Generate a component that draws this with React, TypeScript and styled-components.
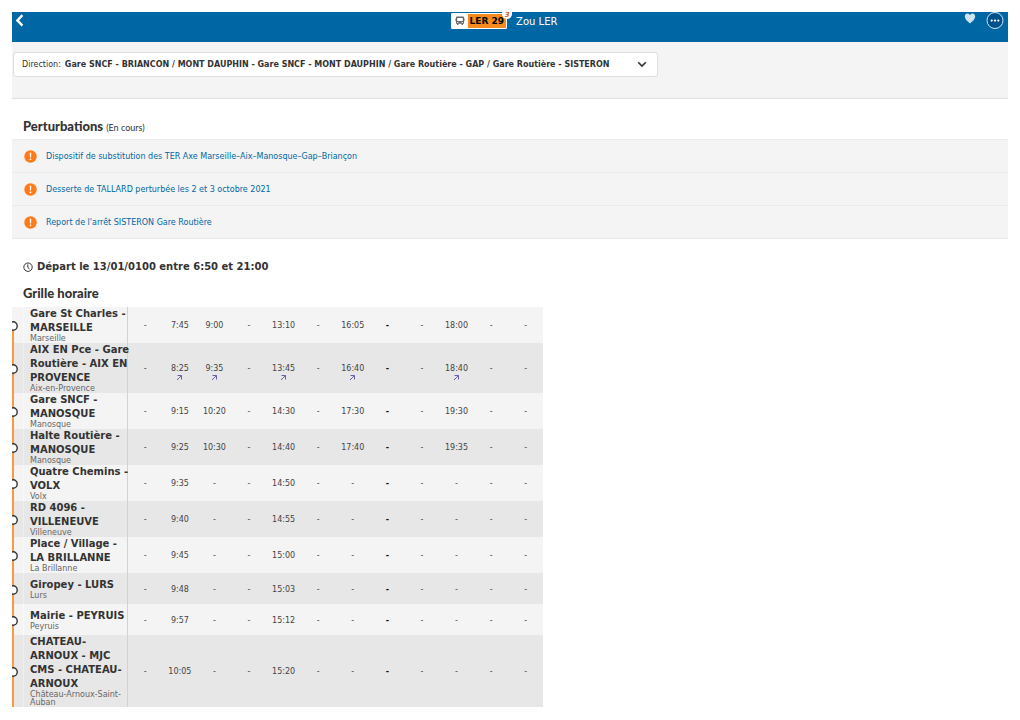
import React from "react";
import styled, { createGlobalStyle, css } from "styled-components";

const GlobalStyle = createGlobalStyle`
  *, *::before, *::after { box-sizing: border-box; }
  body {
    margin: 12px;
    background: #fff;
    color: #333;
    font-family: "DejaVu Sans", Verdana, sans-serif;
    font-size: 8px;
  }
  h1, h2, h3, ul, p { margin: 0; padding: 0; font-weight: inherit; }
  button { margin: 0; padding: 0; border: 0; background: none; font: inherit; color: inherit; cursor: pointer; }
`;

const Header = styled.header`
  display: grid;
  grid-template-columns: 1fr auto 1fr;
  align-items: start;
  height: 30px;
  background: #0067a5;
  color: #fff;
`;

const BackButton = styled.button`
  display: flex;
  width: 14px;
  height: 17px;
  padding: 2px 0 0 3px;
`;

const Title = styled.h1`
  display: flex;
  align-items: center;
  gap: 9px;
  height: 18px;
  padding-right: 12px;
  font-size: 10px;
`;

const LineBadge = styled.span`
  position: relative;
  display: flex;
  align-items: stretch;
  height: 16px;
  border: 1px solid #fff;
  border-radius: 1px;
  background: #fff;
`;

const BadgeMode = styled.span`
  display: flex;
  align-items: center;
  justify-content: center;
  width: 16px;
`;

const BadgeCode = styled.strong`
  padding: 0 2px;
  background: #f58a1f;
  color: #000;
  font-size: 9px;
  line-height: 14px;
`;

const BadgeCount = styled.span`
  position: absolute;
  top: -2px;
  right: -6px;
  width: 10px;
  height: 7px;
  border-radius: 0 0 5px 5px;
  background: #fff;
  color: #d4581a;
  font-size: 7px;
  font-style: italic;
  font-weight: bold;
  line-height: 7px;
  text-align: center;
`;

const Actions = styled.div`
  display: flex;
  justify-content: flex-end;
  gap: 10px;
  padding-right: 4px;
`;

const ActionButton = styled.button`
  display: flex;
  height: 18px;
`;

const DirectionBar = styled.section`
  height: 57px;
  padding: 10px 1px;
  border-bottom: 1px solid #e2e2e2;
  background: #f4f4f4;
`;

const DirectionBox = styled.label`
  display: flex;
  align-items: center;
  max-width: 645px;
  height: 25px;
  padding: 0 10px 0 8px;
  border: 1px solid #dfdfdf;
  border-radius: 3px;
  background: #fff;
`;

const DirectionSelect = styled.select`
  flex: 1;
  min-width: 0;
  margin: 0 0 0 4px;
  padding: 0;
  border: 0;
  appearance: none;
  background: none;
  color: #333;
  font: bold 8px "DejaVu Sans", Verdana, sans-serif;
`;

const SectionTitle = styled.h2`
  padding-left: 11px;
  color: #333;
  font-family: Lato, sans-serif;
  font-size: 13px;
  font-weight: 900;
  line-height: 16px;
`;

const TitleNote = styled.small`
  font-size: 9px;
  font-weight: 400;
`;

const Disruptions = styled.section`
  padding-top: 19px;
`;

const DisruptionList = styled.ul`
  margin-top: 3px;
  list-style: none;
  background: #f4f4f4;
  border-bottom: 1px solid #e8e8e8;
`;

const DisruptionItem = styled.li`
  display: flex;
  align-items: center;
  gap: 9px;
  height: 33px;
  padding-left: 12px;
  border-top: 1px solid #ebebeb;
`;

const DisruptionLink = styled.a`
  color: #0067a5;
  text-decoration: none;
`;

const Departure = styled.p`
  display: flex;
  align-items: center;
  gap: 4px;
  padding: 22px 0 12px 11px;
  font-size: 10px;
  font-weight: bold;
  line-height: 12px;
`;

const Timetable = styled.table`
  width: 531px;
  max-width: 100%;
  margin-top: 6px;
  table-layout: fixed;
  border-collapse: separate;
  border-spacing: 0;
`;

const RailCol = styled.col`
  width: 12px;
`;

const StopCol = styled.col`
  width: 104px;
`;

const Row = styled.tr`
  height: 31px;
  background: #f4f4f4;
  &:nth-child(even) { background: #e7e7e7; }
`;

const RailCell = styled.td<{ $first: boolean }>`
  padding: 2px 0 0;
  border-right: 1px solid rgba(255, 255, 255, 0.35);
  background: linear-gradient(#f59b45, #f59b45) left bottom / 2px ${(p) => (p.$first ? "50%" : "100%")} no-repeat;
  vertical-align: middle;
  & svg { display: block; }
`;

const StopCell = styled.th`
  padding: 0 0 0 6px;
  border-right: 1px solid #d2d2d2;
  text-align: left;
  vertical-align: middle;
  white-space: nowrap;
`;

const StopLine = styled.span`
  display: block;
  font-size: 10px;
  font-weight: bold;
  line-height: 14px;
`;

const TownLine = styled.span`
  display: block;
  color: #666;
  font-size: 8px;
  font-weight: normal;
  line-height: 8px;
`;

const TimeCell = styled.td<{ $strong: boolean }>`
  padding: 2px 0 0;
  color: #444;
  font-size: 8px;
  line-height: 10px;
  text-align: center;
  vertical-align: middle;
  ${(p) =>
    p.$strong &&
    css`
      color: #111;
      font-weight: bold;
    `}
`;

const LinkedTime = styled.span`
  display: flex;
  flex-direction: column;
  align-items: center;
  padding-top: 7px;
`;

type Stop = { name: string[]; town: string[]; times: Record<number, string>; linked?: boolean };

const stops: Stop[] = [
  { name: ["Gare St Charles -", "MARSEILLE"], town: ["Marseille"], times: { 1: "7:45", 2: "9:00", 4: "13:10", 6: "16:05", 9: "18:00" } },
  { name: ["AIX EN Pce - Gare", "Routière - AIX EN", "PROVENCE"], town: ["Aix-en-Provence"], times: { 1: "8:25", 2: "9:35", 4: "13:45", 6: "16:40", 9: "18:40" }, linked: true },
  { name: ["Gare SNCF -", "MANOSQUE"], town: ["Manosque"], times: { 1: "9:15", 2: "10:20", 4: "14:30", 6: "17:30", 9: "19:30" } },
  { name: ["Halte Routière -", "MANOSQUE"], town: ["Manosque"], times: { 1: "9:25", 2: "10:30", 4: "14:40", 6: "17:40", 9: "19:35" } },
  { name: ["Quatre Chemins -", "VOLX"], town: ["Volx"], times: { 1: "9:35", 4: "14:50" } },
  { name: ["RD 4096 -", "VILLENEUVE"], town: ["Villeneuve"], times: { 1: "9:40", 4: "14:55" } },
  { name: ["Place / Village -", "LA BRILLANNE"], town: ["La Brillanne"], times: { 1: "9:45", 4: "15:00" } },
  { name: ["Giropey - LURS"], town: ["Lurs"], times: { 1: "9:48", 4: "15:03" } },
  { name: ["Mairie - PEYRUIS"], town: ["Peyruis"], times: { 1: "9:57", 4: "15:12" } },
  { name: ["CHATEAU-", "ARNOUX - MJC", "CMS - CHATEAU-", "ARNOUX"], town: ["Château-Arnoux-Saint-", "Auban"], times: { 1: "10:05", 4: "15:20" } },
];

const disruptions = [
  "Dispositif de substitution des TER Axe Marseille–Aix–Manosque–Gap–Briançon",
  "Desserte de TALLARD perturbée les 2 et 3 octobre 2021",
  "Report de l'arrêt SISTERON Gare Routière",
];

const columns = Array.from({ length: 12 }, (_, i) => i);
const STRONG_COLUMN = 7;

const ChevronLeft = () => (
  <svg width="9" height="13" viewBox="0 0 9 13" fill="none" stroke="#fff" strokeWidth="2.4">
    <path d="M7.400 1.200 2.400 6.400l5 5.200" />
  </svg>
);

const BusIcon = () => (
  <svg width="10" height="10" viewBox="0 0 10 10">
    <path fill="#666" fillRule="evenodd" d="M2 .6h6q1 0 1 1v1h.6v2.2H9v2.4q0 .6-.6.6H8v1.3H6.6V7.8H3.4v1.3H2V7.8h-.4Q1 7.800 1 7.200V4.800H.4V2.600H1v-1q0-1 1-1ZM2.200 2v3h5.600V2ZM2.200 6v.9h1.200V6ZM6.600 6v.9h1.200V6Z" />
  </svg>
);

const HeartIcon = () => (
  <svg width="12" height="14" viewBox="0 0 12 14">
    <path fill="#cfe3f1" d="M6 11.400C3.400 9.600.8 7 .8 4.300.8 2.600 2 1.500 3.400 1.500c1.100 0 2 .6 2.600 1.600.6-1 1.500-1.600 2.600-1.600 1.400 0 2.600 1.100 2.600 2.800C11.200 7 8.600 9.600 6 11.400Z" />
  </svg>
);

const MoreIcon = () => (
  <svg width="18" height="18" viewBox="0 0 18 18">
    <circle cx="9" cy="8.500" r="8" fill="#00508a" stroke="#d6e6f1" strokeWidth="1" />
    <g fill="#fff">
      <circle cx="5.700" cy="8.600" r="1.100" />
      <circle cx="9" cy="8.600" r="1.100" />
      <circle cx="12.300" cy="8.600" r="1.100" />
    </g>
  </svg>
);

const ChevronDown = () => (
  <svg width="10" height="7" viewBox="0 0 10 7" fill="none" stroke="#333" strokeWidth="1.600">
    <path d="M1.200 1.200 5 5l3.800-3.800" />
  </svg>
);

const WarningIcon = () => (
  <svg width="13" height="13" viewBox="0 0 13 13">
    <circle cx="6.500" cy="6.500" r="6.200" fill="#ff7b17" />
    <path d="M5.700 2.800h1.600L7 7.400H6Z" fill="#fff" />
    <circle cx="6.500" cy="9.300" r=".9" fill="#fff" />
  </svg>
);

const ClockIcon = () => (
  <svg width="10" height="10" viewBox="0 0 10 10" fill="none" stroke="#333" strokeWidth="1">
    <circle cx="5" cy="5.200" r="4.200" />
    <path d="M4.800 2.400v3L6.500 7" />
  </svg>
);

const StopMarker = () => (
  <svg width="6" height="10" viewBox="0 0 6 10">
    <circle cx="1" cy="5" r="4.200" fill="#fff" stroke="#333" strokeWidth="1.400" />
  </svg>
);

const ArrowUpRight = () => (
  <svg width="7" height="7" viewBox="0 0 7 7" fill="none" stroke="#6a5fae" strokeWidth="1">
    <path d="M1 6 5.500 1.500M1.500 1.500h4V5.500" />
  </svg>
);

export default function App() {
  return (
    <>
      <GlobalStyle />
      <Header>
        <BackButton aria-label="Retour"><ChevronLeft /></BackButton>
        <Title>
          <LineBadge>
            <BadgeMode><BusIcon /></BadgeMode>
            <BadgeCode>LER 29</BadgeCode>
            <BadgeCount>3</BadgeCount>
          </LineBadge>
          Zou LER
        </Title>
        <Actions>
          <ActionButton aria-label="Favori"><HeartIcon /></ActionButton>
          <ActionButton aria-label="Plus"><MoreIcon /></ActionButton>
        </Actions>
      </Header>

      <DirectionBar>
        <DirectionBox>
          Direction:
          <DirectionSelect>
            <option>Gare SNCF - BRIANCON / MONT DAUPHIN - Gare SNCF - MONT DAUPHIN / Gare Routière - GAP / Gare Routière - SISTERON</option>
          </DirectionSelect>
          <ChevronDown />
        </DirectionBox>
      </DirectionBar>

      <Disruptions>
        <SectionTitle>Perturbations <TitleNote>(En cours)</TitleNote></SectionTitle>
        <DisruptionList>
          {disruptions.map((text) => (
            <DisruptionItem key={text}>
              <WarningIcon />
              <DisruptionLink href="#">{text}</DisruptionLink>
            </DisruptionItem>
          ))}
        </DisruptionList>
      </Disruptions>

      <Departure><ClockIcon />Départ le 13/01/0100 entre 6:50 et 21:00</Departure>

      <SectionTitle>Grille horaire</SectionTitle>
      <Timetable>
        <colgroup>
          <RailCol />
          <StopCol />
          {columns.map((c) => <col key={c} />)}
        </colgroup>
        <tbody>
          {stops.map((stop, i) => (
            <Row key={i}>
              <RailCell $first={i === 0}><StopMarker /></RailCell>
              <StopCell scope="row">
                {stop.name.map((line) => <StopLine key={line}>{line}</StopLine>)}
                {stop.town.map((line) => <TownLine key={line}>{line}</TownLine>)}
              </StopCell>
              {columns.map((c) => (
                <TimeCell key={c} $strong={c === STRONG_COLUMN}>
                  {stop.linked && stop.times[c]
                    ? <LinkedTime>{stop.times[c]}<ArrowUpRight /></LinkedTime>
                    : stop.times[c] ?? "-"}
                </TimeCell>
              ))}
            </Row>
          ))}
        </tbody>
      </Timetable>
    </>
  );
}
